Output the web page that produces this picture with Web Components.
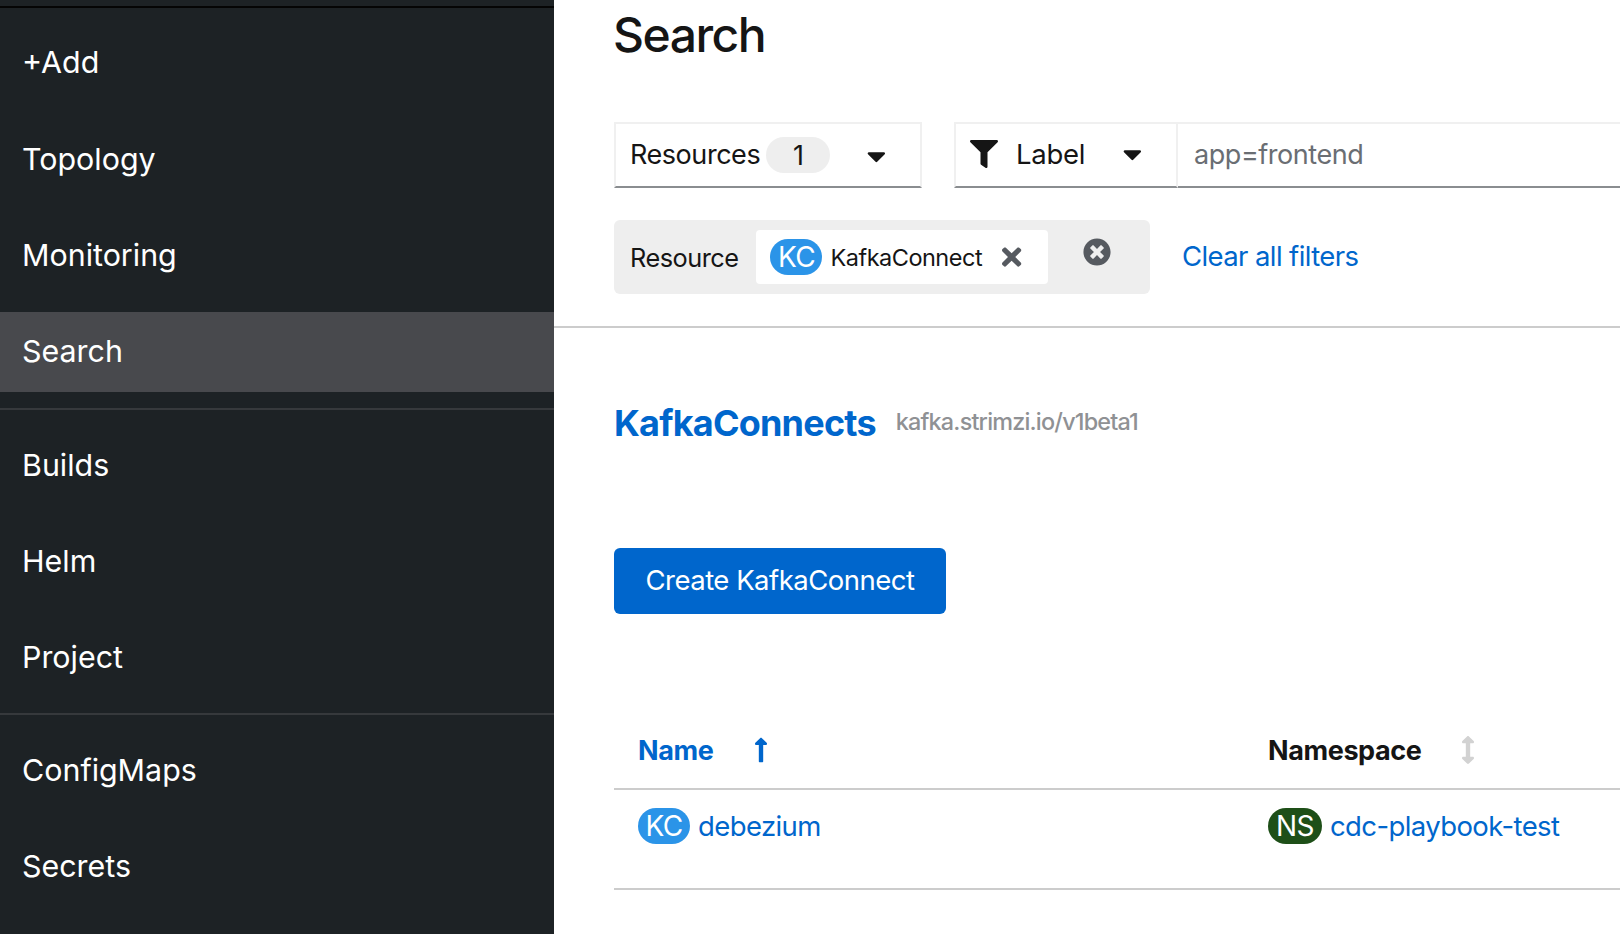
<!DOCTYPE html>
<html><head><meta charset="utf-8"><style>
html,body{margin:0;height:934px;overflow:hidden;background:#fff;font-family:Inter,"Noto Sans",sans-serif;color:#151515}
</style></head><body>
<x-app>
<x-sidebar>
<x-nav-item wide>+Add</x-nav-item><x-nav-item wide>Topology</x-nav-item><x-nav-item wide>Monitoring</x-nav-item><x-nav-item wide active>Search</x-nav-item>
<x-nav-sep></x-nav-sep>
<x-nav-item>Builds</x-nav-item><x-nav-item>Helm</x-nav-item><x-nav-item>Project</x-nav-item>
<x-nav-sep></x-nav-sep>
<x-nav-item>ConfigMaps</x-nav-item><x-nav-item>Secrets</x-nav-item>
</x-sidebar>
<x-search-page></x-search-page>
</x-app>
<script>
const I={
filter:['0 0 512 512','M487.976 0H24.028C2.71 0-8.047 25.866 7.058 40.971L192 225.941V432c0 7.831 3.821 15.17 10.237 19.662l80 55.98C298.02 518.69 320 507.493 320 487.98V225.941l184.947-184.97C520.021 25.896 509.338 0 487.976 0z'],
times:['0 0 352 512','M242.72 256l100.07-100.07c12.28-12.28 12.28-32.19 0-44.48l-22.24-22.24c-12.28-12.28-32.19-12.28-44.48 0L176 189.28 75.93 89.21c-12.28-12.28-32.19-12.28-44.48 0L9.21 111.45c-12.28 12.28-12.28 32.19 0 44.48L109.28 256 9.21 356.07c-12.28 12.28-12.28 32.19 0 44.48l22.24 22.24c12.28 12.28 32.2 12.28 44.48 0L176 322.72l100.07 100.07c12.28 12.28 32.2 12.28 44.48 0l22.24-22.24c12.28-12.28 12.28-32.19 0-44.48L242.72 256z'],
circle:['0 0 512 512','M256 8C119 8 8 119 8 256s111 248 248 248 248-111 248-248S393 8 256 8zm121.6 313.1c4.7 4.7 4.7 12.3 0 17L338 377.6c-4.7 4.7-12.3 4.7-17 0L256 312l-65.1 65.6c-4.7 4.7-12.3 4.7-17 0L134.4 338c-4.7-4.7-4.7-12.3 0-17l65.6-65-65.6-65.1c-4.7-4.7-4.7-12.3 0-17l39.6-39.6c4.7-4.7 12.3-4.7 17 0l65 65.7 65.1-65.6c4.7-4.7 12.3-4.7 17 0l39.6 39.6c4.7 4.7 4.7 12.3 0 17L312 256l65.6 65.1z'],
caret:['0 0 320 512','M31.3 192h257.3c17.8 0 26.7 21.5 14.1 34.1L174.1 354.8c-7.8 7.8-20.5 7.8-28.3 0L17.2 226.1C4.6 213.5 13.5 192 31.3 192z'],
up:['0 0 256 512','M88 166.059V468c0 6.627 5.373 12 12 12h56c6.627 0 12-5.373 12-12V166.059h46.059c21.382 0 32.09-25.851 16.971-40.971l-86.059-86.059c-9.373-9.373-24.569-9.373-33.941 0l-86.059 86.059c-15.119 15.119-4.411 40.971 16.971 40.971H88z'],
updown:['0 0 256 512','M214.059 377.941H168V134.059h46.059c21.382 0 32.09-25.851 16.971-40.971L144.971 7.029c-9.373-9.373-24.569-9.373-33.941 0L24.971 93.088c-15.119 15.119-4.411 40.971 16.971 40.971H88v243.882H41.941c-21.382 0-32.09 25.851-16.971 40.971l86.059 86.059c9.373 9.373 24.569 9.373 33.941 0l86.059-86.059c15.12-15.119 4.412-40.971-16.97-40.971z']};
const svg=(n,h,c)=>{const[v,d]=I[n];const p=v.split(' ');return `<svg viewBox="${v}" height="${h}" width="${h*p[2]/p[3]}" fill="${c}" style="display:block;flex:none"><path d="${d}"/></svg>`};
function def(name,html){customElements.define(name,class extends HTMLElement{connectedCallback(){if(this.shadowRoot)return;this.attachShadow({mode:'open'}).innerHTML=typeof html==='function'?html(this):html}})}
def('x-app',`<style>:host{display:flex;height:934px;overflow:hidden}</style><slot></slot>`);
def('x-sidebar',`<style>:host{display:block;flex:none;width:554px;height:934px;background:#1d2225;overflow:hidden;box-sizing:border-box;padding-top:22px;position:relative}
.t{position:absolute;left:0;right:0;top:6px;height:2px;background:#050505}</style><div class="t"></div><slot></slot>`);
def('x-nav-item',`<style>:host{display:flex;align-items:center;box-sizing:border-box;height:80px;padding:0 0 0 22px;margin-bottom:16px;color:#fff;font-size:30.4px;letter-spacing:0}
:host([wide]){margin-bottom:16.7px}
:host([active]){background:#48494d;margin-bottom:15.6px;padding-bottom:2px}</style><slot></slot>`);
def('x-nav-sep',`<style>:host{display:block;height:2px;background:#36393c;margin-bottom:15px}</style>`);
def('x-badge',el=>`<style>:host{display:inline-flex;align-items:center;justify-content:center;flex:none;height:36px;border-radius:18px;color:#fff;font-size:28px;letter-spacing:-.6px;background:${el.getAttribute('bg')};width:${el.getAttribute('w')}px}</style><slot></slot>`);
def('x-link',`<style>:host{color:#06c;font-size:27.5px;letter-spacing:-.6px}</style><slot></slot>`);
def('x-select',`<style>:host{display:flex;align-items:center;height:66px;box-sizing:border-box;border:2px solid #f0f0f0;border-bottom-color:#8a8d90;padding-bottom:2px;font-size:27px;letter-spacing:-.45px;flex:none}</style><slot></slot>`);
def('x-search-page',`<style>
:host{display:block;flex:1;min-width:0;height:934px;overflow:hidden;background:#fff}
.pad{padding-left:60px}
h1{margin:0 0 0 -1px;font-size:48px;font-weight:500;letter-spacing:-1.5px;line-height:60px;padding-top:5px;height:60px}
.filters{display:flex;margin-top:57px}
.res{width:308px;padding-left:14px;justify-content:flex-start}
.count{display:inline-flex;justify-content:center;align-items:center;width:64px;height:36px;border-radius:18px;background:#eee;margin:2px 0 0 6px}
.res svg{margin:3px 0 0 37px}
.label{width:224px;margin-left:32px;padding-left:14px;font-size:27.5px;letter-spacing:-.3px}
.label .t{margin-left:18px;width:107px}
.input{width:600px;border-left:none;padding-left:16px;color:#6a6e73}
.chiprow{display:flex;align-items:center;margin-top:32px}
.group{display:flex;align-items:center;width:536px;height:74px;background:#eee;border-radius:6px;box-sizing:border-box;padding-left:16px;font-size:25.3px;letter-spacing:-.5px}
.chip{display:flex;align-items:center;width:292px;height:54px;background:#fff;border-radius:4px;margin-left:18px;box-sizing:border-box;padding-left:14px;font-size:23.5px}
.chip span{margin-left:8px;width:172px}
.close{margin:-10px 0 0 35px}
.clear{margin:0 0 2px 32px}
hr{border:0;height:2px;background:#ccc;margin:32px 0 0}
.head{display:flex;align-items:center;margin-top:74px;height:42px}
h2{margin:0;font-size:36px;font-weight:700;color:#06c;letter-spacing:-.8px}
.api{margin:0 0 4px 20px;color:#8f9194;font-size:23.4px;font-weight:500;letter-spacing:-.8px}
.btn{display:flex;align-items:center;justify-content:center;box-sizing:border-box;padding-bottom:2px;width:332px;height:66px;background:#06c;border-radius:6px;color:#fff;font-size:27.5px;letter-spacing:-.5px;margin-top:104px}
.tbl{margin:0 0 0 60px;display:grid;grid-template-columns:630px 1fr}
.th{display:flex;align-items:center;height:76px;margin-top:98px;padding:0 0 0 24px;font-size:27px;font-weight:700;letter-spacing:-.4px;border-bottom:2px solid #ccc}
.th.a{color:#06c}
.th.a svg{margin-left:41px}
.th.b svg{margin-left:40px}
.td{display:flex;align-items:flex-start;padding:18px 0 0 24px;box-sizing:border-box;border-bottom:2px solid #ccc;gap:8px;height:100px}
.td x-link{line-height:36px}
</style>
<div class="pad">
<h1>Search</h1>
<div class="filters">
<x-select class="res">Resources<span class="count">1</span>${svg('caret',30,'#151515')}</x-select>
<x-select class="label">${svg('filter',28,'#151515')}<span class="t">Label</span>${svg('caret',30,'#151515')}</x-select>
<x-select class="input">app=frontend</x-select>
</div>
<div class="chiprow">
<div class="group">Resource<div class="chip"><x-badge bg="#2b94e8" w="52">KC</x-badge><span>KafkaConnect</span>${svg('times',28,'#565a60')}</div><div class="close">${svg('circle',28,'#565a60')}</div></div>
<x-link class="clear">Clear all filters</x-link>
</div>
</div>
<hr>
<div class="pad">
<div class="head"><h2>KafkaConnects</h2><span class="api">kafka.strimzi.io/v1beta1</span></div>
<div class="btn">Create KafkaConnect</div>
</div>
<div class="tbl">
<div class="th a">Name${svg('up',28,'#06c')}</div><div class="th b">Namespace${svg('updown',28,'#d2d2d2')}</div>
<div class="td"><x-badge bg="#2b94e8" w="52">KC</x-badge><x-link>debezium</x-link></div>
<div class="td"><x-badge bg="#1e4f18" w="54">NS</x-badge><x-link>cdc-playbook-test</x-link></div>
</div>`);
</script>
</body></html>
